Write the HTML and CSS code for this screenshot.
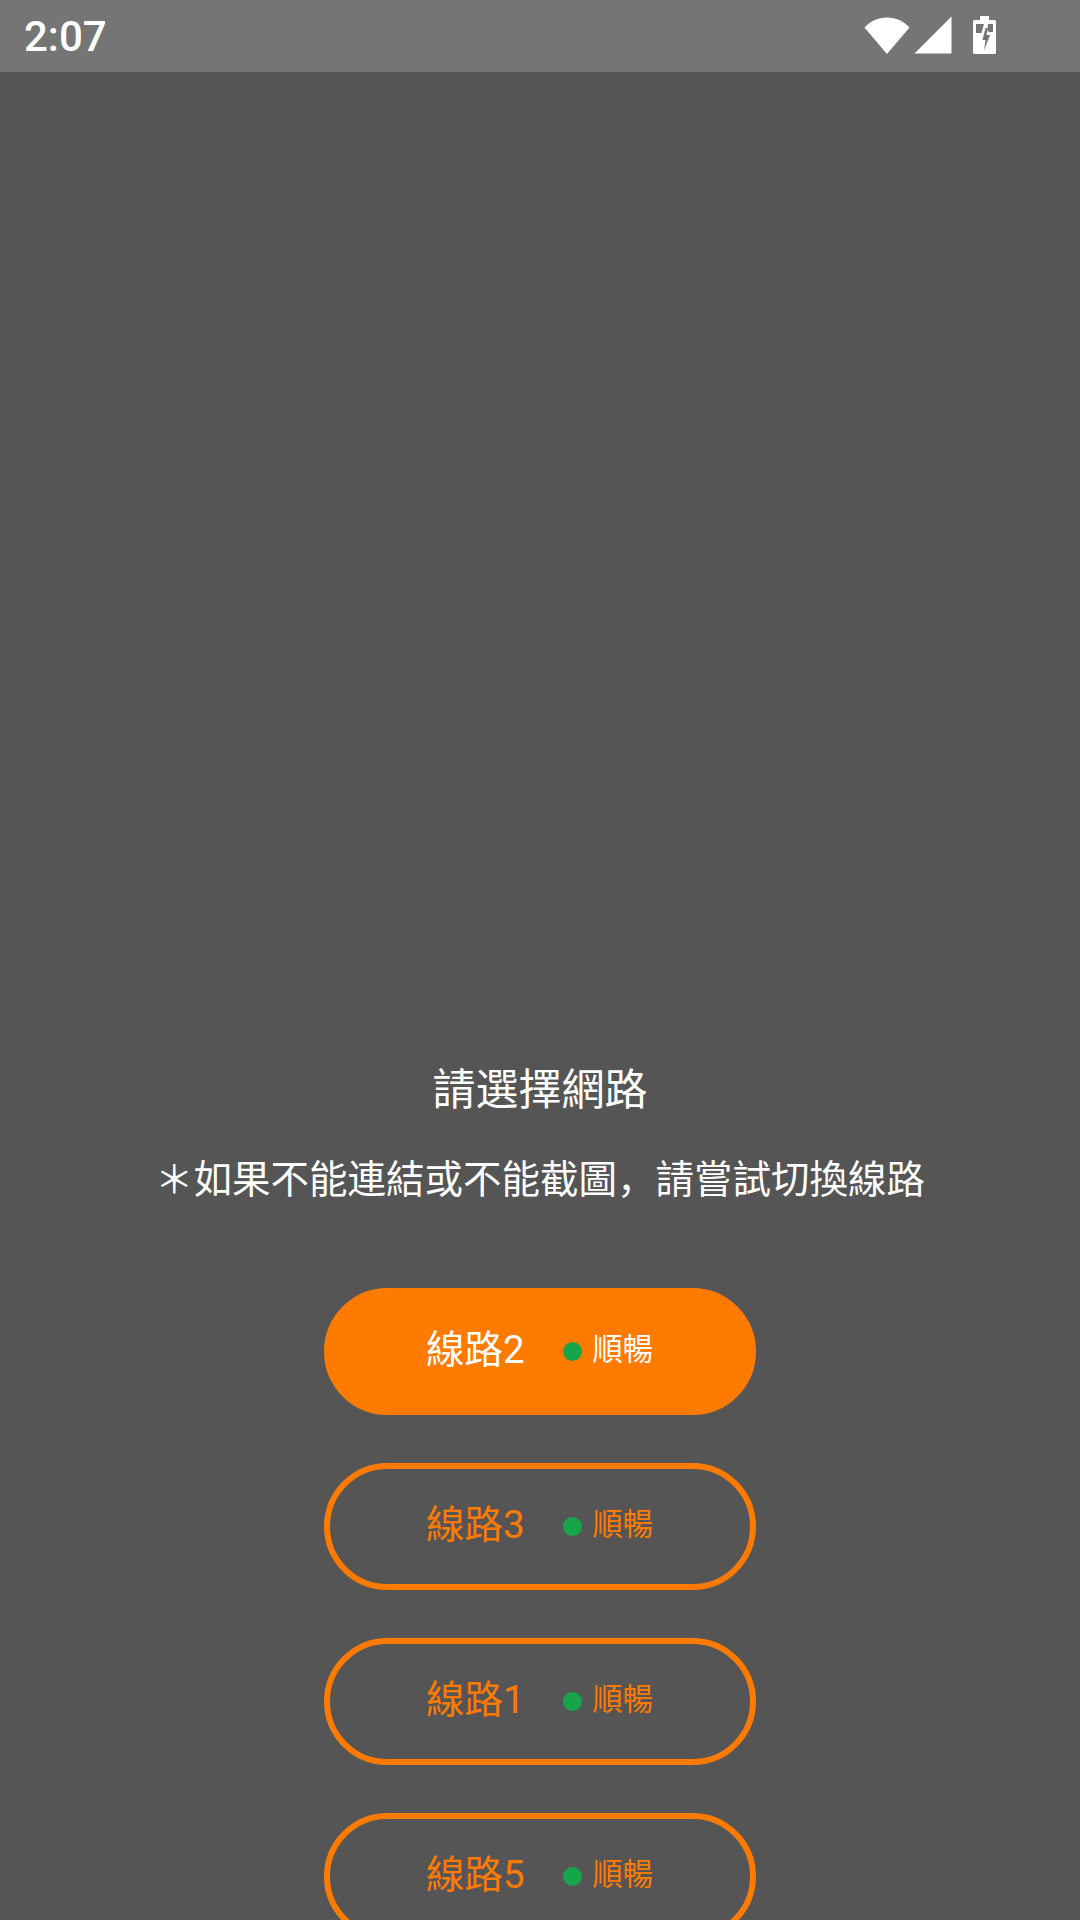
FILE: index.html
```html
<!DOCTYPE html>
<html lang="zh-Hans">
<head>
<meta charset="utf-8" />
<title>請選擇網路</title>
<link rel="stylesheet" href="styles.css">
</head>
<body>
<div class="status_bar">
    <span class="time">2:07</span>
    <div class="status_icons">
        <svg class="ic_wifi" width="46" height="38" viewBox="0 0 46 38"><path d="M0.5 11.5C6.5 5 14 1.5 23 1.5S39.500 5 45.500 11.500L23 38Z" fill="#fff"/></svg>
        <svg class="ic_signal" width="38" height="38" viewBox="0 0 38 38"><path d="M37.500 0.500V36.500A1 1 0 0 1 36.500 37.500H0.500Z" fill="#fff"/></svg>
        <svg class="ic_battery" width="23" height="38" viewBox="0 0 23 38"><path fill-rule="evenodd" d="M7 0H16V4H21.500A1.500 1.500 0 0 1 23 5.500V36.500A1.500 1.500 0 0 1 21.500 38H1.500A1.500 1.500 0 0 1 0 36.500V5.500A1.500 1.500 0 0 1 1.500 4H7ZM3 8H11L8.500 17H3ZM15 8H20V16H15.500L14.500 13ZM12.500 12L9.500 24H12.500L11 34.500L17 19H13.500L15 12Z" fill="#fff"/></svg>
    </div>
</div>
<div class="main">
    <h1 class="title">請選擇網路</h1>
    <p class="tip">＊如果不能連結或不能截圖，請嘗試切換線路</p>
    <ul class="line_list">
        <li class="line active"><span class="name">線路2</span><i class="dot"></i><span class="state">順暢</span></li>
        <li class="line"><span class="name">線路3</span><i class="dot"></i><span class="state">順暢</span></li>
        <li class="line"><span class="name">線路1</span><i class="dot"></i><span class="state">順暢</span></li>
        <li class="line"><span class="name">線路5</span><i class="dot"></i><span class="state">順暢</span></li>
    </ul>
</div>
</body>
</html>
```

FILE: styles.css
```css
html, body { margin: 0; padding: 0; }
body { width: 1080px; height: 1920px; overflow: hidden; background: #555; color: #fff; font-family: Roboto, "Noto Sans CJK SC", sans-serif; }
ul { padding: 0; margin: 0; }
li { list-style: none; }

.status_bar { height: 72px; display: flex; align-items: center; justify-content: space-between; padding: 0 84px 0 24px; background: #757575; box-sizing: border-box; }
.time { font-size: 42px; font-weight: 500; line-height: 72px; margin-top: 2px; }
.status_icons { display: flex; align-items: center; gap: 4px; padding-bottom: 2px; }
.ic_battery { margin-left: 17px; }

.main { display: flex; flex-direction: column; align-items: center; padding-top: 988px; }
.title { margin: 0; font-size: 43px; font-weight: 400; line-height: 60px; }
.tip { margin: 32px 0 0; font-size: 38.5px; line-height: 56px; }

.line_list { margin-top: 80px; display: flex; flex-direction: column; gap: 48px; }
.line { width: 432px; height: 127px; box-sizing: border-box; display: flex; align-items: center; justify-content: center; padding-right: 1px; border: 6px solid #ff7b00; border-radius: 64px; color: #ff7b00; }
.line.active { background: #ff7b00; color: #fff; }
.name { font-size: 38.5px; line-height: 50px; margin-top: -4px; }
.dot { width: 19px; height: 19px; border-radius: 50%; background: #17a54a; margin: 0 11px 0 38px; }
.state { font-size: 30.25px; line-height: 40px; margin-top: -4px; }
```
